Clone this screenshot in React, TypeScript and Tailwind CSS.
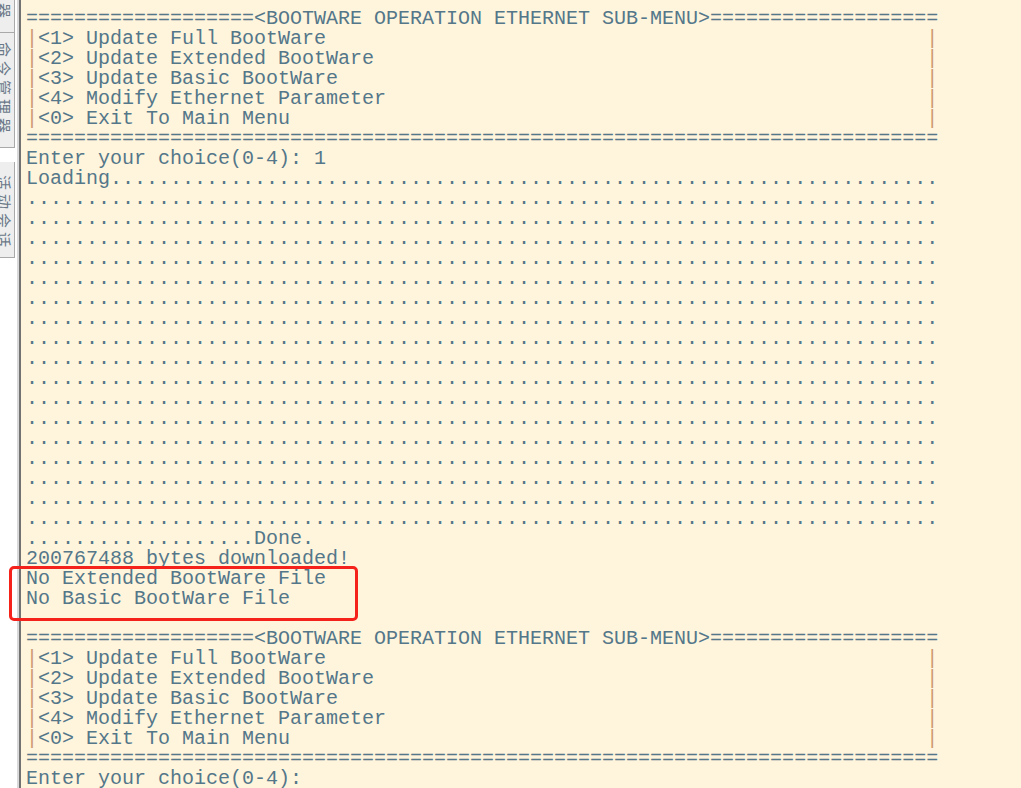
import React from "react";

const COLS = 76;
const header = "=".repeat(19) + "<BOOTWARE OPERATION ETHERNET SUB-MENU>" + "=".repeat(19);
const rule = "=".repeat(COLS);
const menuItems = [
  "<1> Update Full BootWare",
  "<2> Update Extended BootWare",
  "<3> Update Basic BootWare",
  "<4> Modify Ethernet Parameter",
  "<0> Exit To Main Menu",
];

const MenuBlock: React.FC = () => (
  <>
    <div>{header}</div>
    {menuItems.map((item) => (
      <div key={item}>
        <span className="text-[#cf9a74]">|</span>
        {item.padEnd(COLS - 2, " ")}
        <span className="text-[#cf9a74]">|</span>
      </div>
    ))}
    <div>{rule}</div>
  </>
);

const Tab: React.FC<{ label: string; className: string }> = ({ label, className }) => (
  <div
    className={`w-[15px] bg-[#eeeeee] border-r border-b border-[#a9a9a9] overflow-hidden flex ${className}`}
  >
    <span className="-ml-[3px] [writing-mode:vertical-rl] [text-orientation:sideways] text-[15px] leading-[15px] tracking-[4px] text-[#6a7888] font-['Noto_Sans_CJK_SC',sans-serif] whitespace-nowrap">
      {label}
    </span>
  </div>
);

const App: React.FC = () => {
  const dotLines = Array.from({ length: 17 }, () => ".".repeat(COLS));

  return (
    <div className="relative flex w-[1021px] h-[788px] overflow-hidden bg-white">
      <div className="flex shrink-0">
        <div className="flex flex-col w-[15px]">
          <Tab label="管理器" className="h-[33px] items-end pb-[10px]" />
          <Tab label="命令管理器" className="h-[115px] items-start pt-[9px]" />
          <div className="h-[14px]" />
          <Tab label="活动会话" className="h-[96px] items-start pt-[13px]" />
        </div>
        <div className="w-[2px] bg-white" />
        <div className="w-[2px] bg-[#d9d9d9]" />
        <div className="w-[2px] bg-[#727272]" />
      </div>

      <div className="flex-1 bg-[#fff5dc] pl-[5px] pt-[9px] text-[#54778a] font-['Liberation_Mono',monospace] text-[20px] leading-[20px] whitespace-pre">
        <MenuBlock />
        <div>Enter your choice(0-4): 1</div>
        <div>{"Loading" + ".".repeat(COLS - 7)}</div>
        {dotLines.map((line, i) => (
          <div key={i}>{line}</div>
        ))}
        <div>{".".repeat(19) + "Done."}</div>
        <div>200767488 bytes downloaded!</div>
        <div>No Extended BootWare File</div>
        <div>No Basic BootWare File</div>
        <div> </div>
        <MenuBlock />
        <div>Enter your choice(0-4):</div>
      </div>

      <div className="absolute left-[9px] top-[566px] w-[349px] h-[55px] border-[3px] border-[#f5221c] rounded-[5px]" />
    </div>
  );
};

export default App;
